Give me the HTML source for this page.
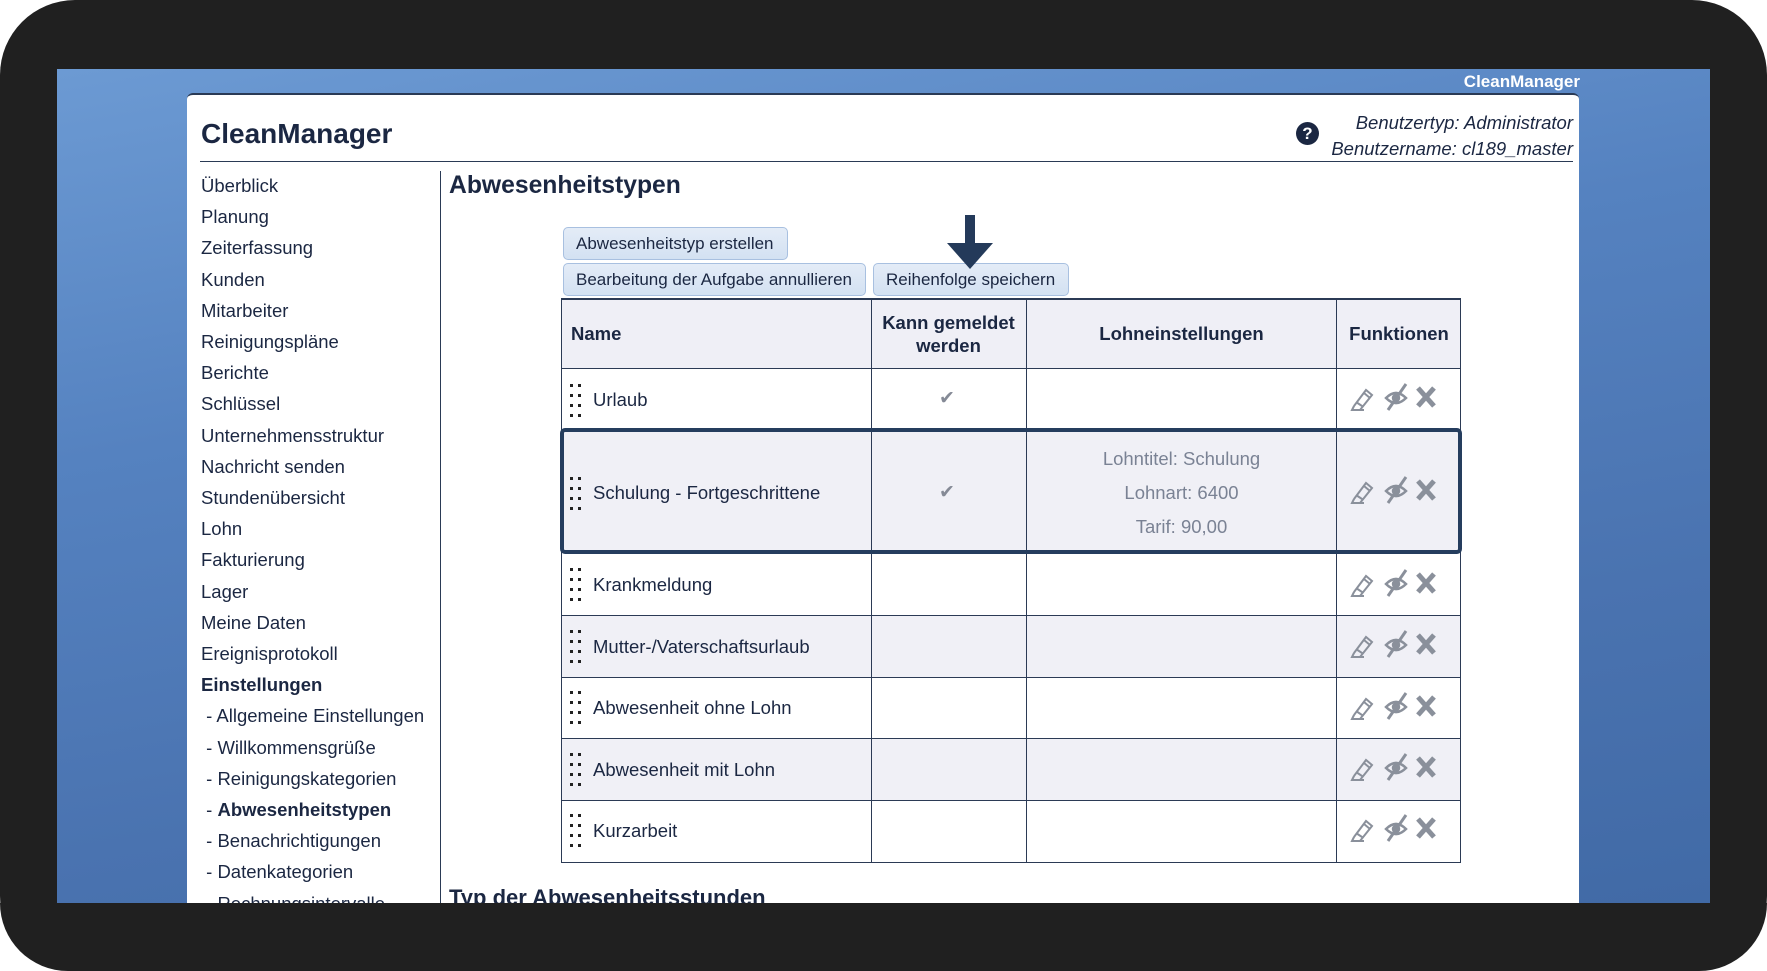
<!DOCTYPE html>
<html><head><meta charset="utf-8">
<style>
*{margin:0;padding:0;box-sizing:border-box}
body{width:1767px;height:971px;background:#fff;position:relative;overflow:hidden;font-family:"Liberation Sans",Arial,sans-serif;color:#1b2742}
.frame{position:absolute;left:0;top:0;width:1767px;height:971px;background:#202020;border-radius:75px}
.blue{position:absolute;left:57px;top:69px;width:1653px;height:834px;background:linear-gradient(170deg,#6c9ad3 0%,#5582c0 35%,#4a73b0 70%,#416aa6 100%);overflow:hidden}
.topname{position:absolute;right:130px;top:3px;color:#fff;font-weight:bold;font-size:17px}
.abs{position:absolute;white-space:nowrap}
.nav{font-size:18.5px;line-height:31.2px}
.btn{position:absolute;height:33px;background:linear-gradient(#e4ecf7,#d3e1f2);border:1px solid #a8c0e0;border-radius:5px;font-size:17px;line-height:31px;padding:0 12px;color:#1b2742;white-space:nowrap}
.td{position:absolute;white-space:nowrap;font-size:18.5px}
</style></head><body>
<div class="frame"></div>
<div class="blue">
<div class="topname">CleanManager</div>
</div>
<div style="position:absolute;left:187px;top:93px;width:1392px;height:810px;background:#fff;border-radius:6px 6px 0 0;border-top:2px solid #2a3a55"></div>
<div class="abs" style="left:201px;top:118px;font-size:28px;font-weight:bold">CleanManager</div>
<div style="position:absolute;left:200px;top:161px;width:1373px;height:1px;background:#2a3a55"></div>
<div class="abs" style="left:1296px;top:122px;width:23px;height:23px;border-radius:50%;background:#1b2742;color:#fff;font-weight:bold;font-size:17px;text-align:center;line-height:23px">?</div>
<div class="abs" style="right:194px;top:110px;font-size:18.5px;font-style:italic;text-align:right;line-height:26px">Benutzertyp: Administrator<br>Benutzername: cl189_master</div>
<div style="position:absolute;left:440px;top:171px;width:1px;height:732px;background:#2a3a55"></div>
<div class="abs nav" style="left:201px;top:170px">Überblick<br>Planung<br>Zeiterfassung<br>Kunden<br>Mitarbeiter<br>Reinigungspläne<br>Berichte<br>Schlüssel<br>Unternehmensstruktur<br>Nachricht senden<br>Stundenübersicht<br>Lohn<br>Fakturierung<br>Lager<br>Meine Daten<br>Ereignisprotokoll<br><b>Einstellungen</b><br>&nbsp;- Allgemeine Einstellungen<br>&nbsp;- Willkommensgrüße<br>&nbsp;- Reinigungskategorien<br>&nbsp;- <b>Abwesenheitstypen</b><br>&nbsp;- Benachrichtigungen<br>&nbsp;- Datenkategorien<br>&nbsp;- Rechnungsintervalle</div>
<div class="abs" style="left:449px;top:172px;font-size:24.7px;font-weight:bold">Abwesenheitstypen</div>
<div class="btn" style="left:563px;top:227px;width:225px">Abwesenheitstyp erstellen</div>
<div class="btn" style="left:563px;top:263px;width:303px">Bearbeitung der Aufgabe annullieren</div>
<div class="btn" style="left:873px;top:263px;width:196px">Reihenfolge speichern</div>
<svg class="abs" style="left:945px;top:215px" width="50" height="56"><rect x="20" y="0" width="10" height="30" fill="#243a5a"/><polygon points="2,28 48,28 25,54" fill="#243a5a"/></svg>

<div style="position:absolute;left:561px;top:298px;width:900px;height:565px;border:1px solid #2b3a55;border-top:2px solid #2b3a55"></div>
<div style="position:absolute;left:562px;top:300px;width:898px;height:69px;background:#efeff6;border-bottom:1px solid #2b3a55"></div>
<div class="td" style="left:571px;top:323px;font-weight:bold">Name</div>
<div class="td" style="left:871px;top:311px;width:155px;text-align:center;font-weight:bold;line-height:23px">Kann gemeldet<br>werden</div>
<div class="td" style="left:1026px;top:323px;width:311px;text-align:center;font-weight:bold">Lohneinstellungen</div>
<div class="td" style="left:1337px;top:323px;width:124px;text-align:center;font-weight:bold">Funktionen</div>

<div style="position:absolute;left:562px;top:429px;width:898px;height:124px;background:#f0f0f6"></div>
<div style="position:absolute;left:562px;top:615px;width:898px;height:62px;background:#f0f0f6"></div>
<div style="position:absolute;left:562px;top:738px;width:898px;height:62px;background:#f0f0f6"></div>
<div style="position:absolute;left:562px;top:615px;width:898px;height:1px;background:#2b3a55"></div>
<div style="position:absolute;left:562px;top:677px;width:898px;height:1px;background:#2b3a55"></div>
<div style="position:absolute;left:562px;top:738px;width:898px;height:1px;background:#2b3a55"></div>
<div style="position:absolute;left:562px;top:800px;width:898px;height:1px;background:#2b3a55"></div>
<div style="position:absolute;left:871px;top:300px;width:1px;height:563px;background:#2b3a55"></div>
<div style="position:absolute;left:1026px;top:300px;width:1px;height:563px;background:#2b3a55"></div>
<div style="position:absolute;left:1336px;top:300px;width:1px;height:563px;background:#2b3a55"></div>
<div style="position:absolute;left:560px;top:428px;width:902px;height:126px;border:4px solid #253d5e;border-radius:5px"></div>

<div class="td" style="left:593px;top:389px">Urlaub</div>
<div class="td" style="left:593px;top:482px">Schulung - Fortgeschrittene</div>
<div class="td" style="left:593px;top:574px">Krankmeldung</div>
<div class="td" style="left:593px;top:636px">Mutter-/Vaterschaftsurlaub</div>
<div class="td" style="left:593px;top:697px">Abwesenheit ohne Lohn</div>
<div class="td" style="left:593px;top:759px">Abwesenheit mit Lohn</div>
<div class="td" style="left:593px;top:820px">Kurzarbeit</div>

<div class="abs" style="left:939px;top:387px;font-size:19px;color:#858a96">✔</div>
<div class="abs" style="left:939px;top:481px;font-size:19px;color:#858a96">✔</div>
<div class="abs" style="left:1026px;top:442px;width:311px;text-align:center;font-size:18.5px;color:#7a8294;line-height:34px">Lohntitel: Schulung<br>Lohnart: 6400<br>Tarif: 90,00</div>

<svg width="1767" height="971" style="position:absolute;left:0;top:0">
<defs>
<g id="dots" fill="#222"><rect x="0" y="0" width="3" height="3"/><rect x="8" y="0" width="3" height="3"/><rect x="0" y="10" width="3" height="3"/><rect x="8" y="10" width="3" height="3"/><rect x="0" y="20" width="3" height="3"/><rect x="8" y="20" width="3" height="3"/><rect x="0" y="30" width="3" height="3"/><rect x="8" y="30" width="3" height="3"/></g>
<g id="ic" fill="none" stroke="#8a909b" stroke-width="2.5">
<path d="M4 24 L2 28 L14 28 M4 24 L16 8 L22 13 L10 28 M6 20 L12 24 M14 11 L20 16" stroke-width="2"/>
<path d="M36 16 Q46 6 56 16 Q46 26 36 16 Z" />
<circle cx="46" cy="16" r="3" fill="#8a909b"/>
<path d="M38 28 L56 2" stroke-width="3"/>
<path d="M68 6 L84 24 M84 6 L68 24" stroke-width="5"/>
</g>
</defs>
<use href="#dots" x="570" y="384"/>
<use href="#dots" x="570" y="477"/>
<use href="#dots" x="570" y="568"/>
<use href="#dots" x="570" y="630"/>
<use href="#dots" x="570" y="691"/>
<use href="#dots" x="570" y="753"/>
<use href="#dots" x="570" y="814"/>
<use href="#ic" x="1350" y="382"/>
<use href="#ic" x="1350" y="475"/>
<use href="#ic" x="1350" y="568"/>
<use href="#ic" x="1350" y="629"/>
<use href="#ic" x="1350" y="691"/>
<use href="#ic" x="1350" y="752"/>
<use href="#ic" x="1350" y="813"/>
</svg>
<div class="abs" style="left:449px;top:885px;font-size:22px;font-weight:bold">Typ der Abwesenheitsstunden</div>
<div style="position:absolute;left:0;top:903px;width:1767px;height:68px;background:#202020;border-radius:0 0 75px 75px"></div>
</body></html>
